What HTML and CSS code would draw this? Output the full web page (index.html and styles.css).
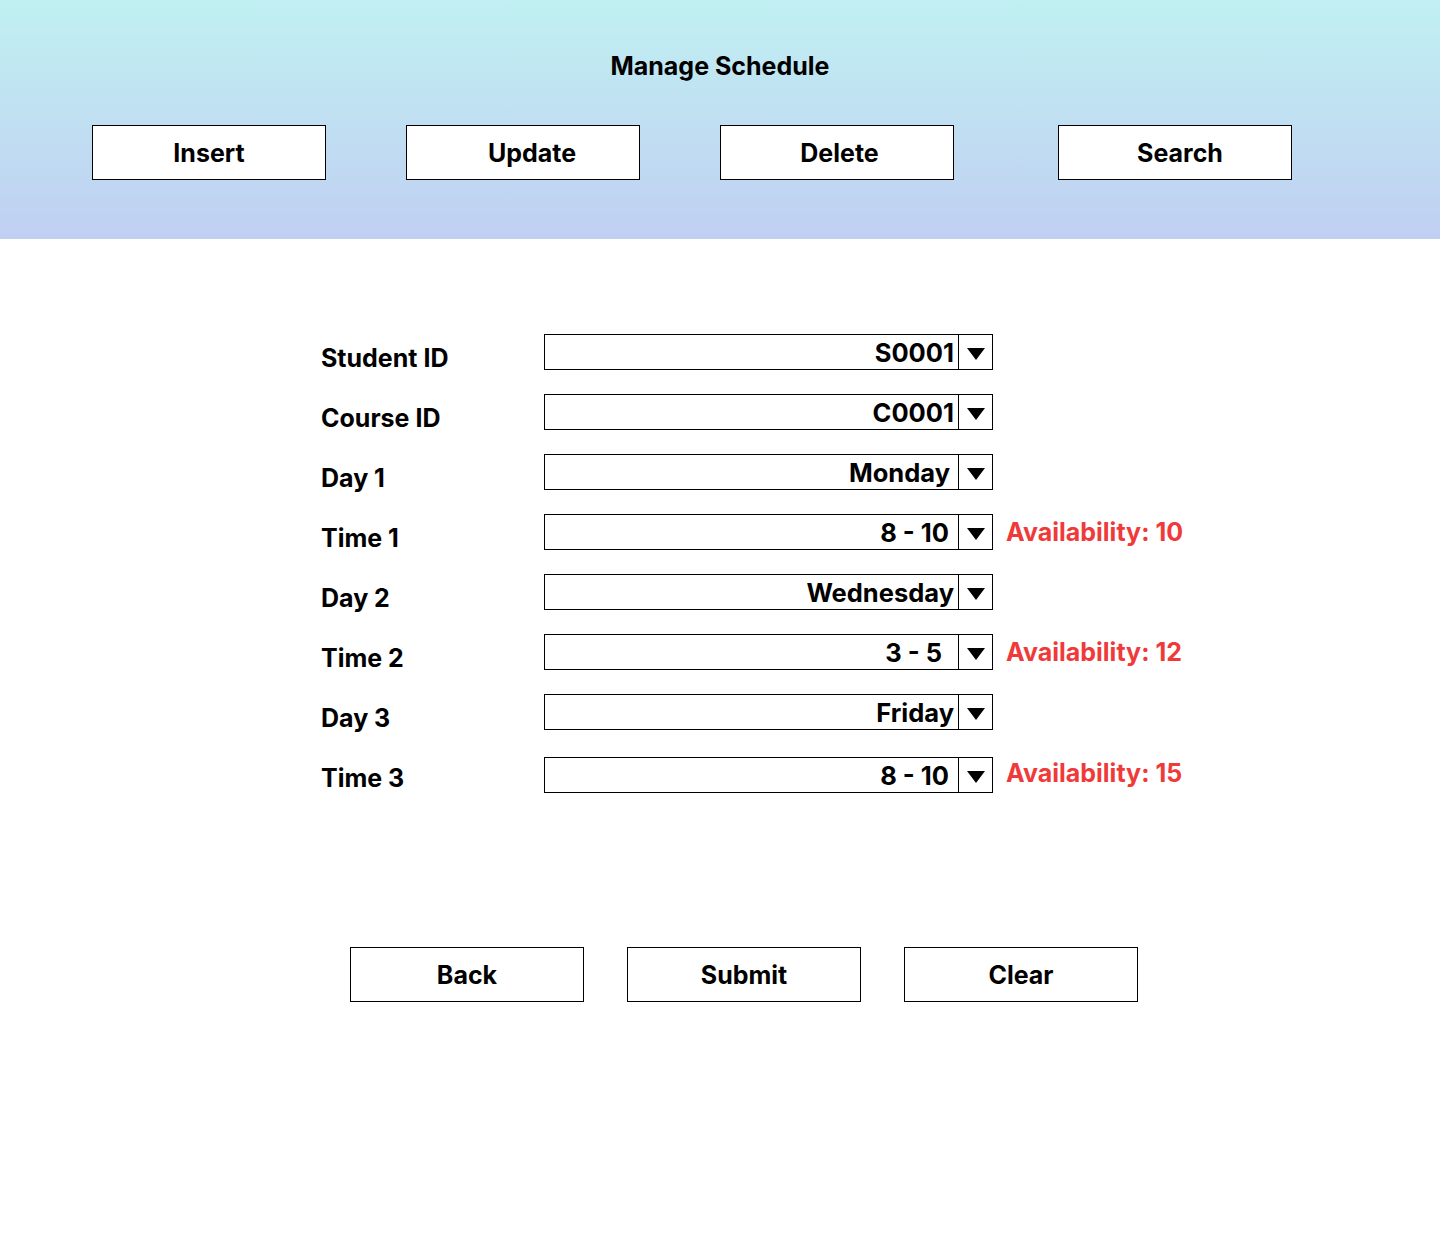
FILE: index.html
```html
<!DOCTYPE html>
<html lang="en">
<head>
<meta charset="utf-8">
<title>Manage Schedule</title>
<link rel="stylesheet" href="styles.css">
</head>
<body>
<header class="top">
  <h1 class="title">Manage Schedule</h1>
  <nav class="actions">
    <button class="btn">Insert</button>
    <button class="btn btn-update">Update</button>
    <button class="btn btn-delete">Delete</button>
    <button class="btn btn-far">Search</button>
  </nav>
</header>
<main class="form">
  <div class="row">
    <span class="label">Student ID</span>
    <div class="select"><span class="value">S0001</span><span class="arrow"><svg width="18" height="12" viewBox="0 0 18 12"><polygon points="0,0 18,0 9,12" fill="#000"/></svg></span></div>
  </div>
  <div class="row">
    <span class="label">Course ID</span>
    <div class="select"><span class="value">C0001</span><span class="arrow"><svg width="18" height="12" viewBox="0 0 18 12"><polygon points="0,0 18,0 9,12" fill="#000"/></svg></span></div>
  </div>
  <div class="row">
    <span class="label">Day 1</span>
    <div class="select"><span class="value v-monday">Monday</span><span class="arrow"><svg width="18" height="12" viewBox="0 0 18 12"><polygon points="0,0 18,0 9,12" fill="#000"/></svg></span></div>
  </div>
  <div class="row">
    <span class="label">Time 1</span>
    <div class="select"><span class="value v-time">8 - 10</span><span class="arrow"><svg width="18" height="12" viewBox="0 0 18 12"><polygon points="0,0 18,0 9,12" fill="#000"/></svg></span></div>
    <span class="avail">Availability: 10</span>
  </div>
  <div class="row">
    <span class="label">Day 2</span>
    <div class="select"><span class="value">Wednesday</span><span class="arrow"><svg width="18" height="12" viewBox="0 0 18 12"><polygon points="0,0 18,0 9,12" fill="#000"/></svg></span></div>
  </div>
  <div class="row">
    <span class="label">Time 2</span>
    <div class="select"><span class="value v-short">3 - 5</span><span class="arrow"><svg width="18" height="12" viewBox="0 0 18 12"><polygon points="0,0 18,0 9,12" fill="#000"/></svg></span></div>
    <span class="avail">Availability: 12</span>
  </div>
  <div class="row">
    <span class="label">Day 3</span>
    <div class="select"><span class="value">Friday</span><span class="arrow"><svg width="18" height="12" viewBox="0 0 18 12"><polygon points="0,0 18,0 9,12" fill="#000"/></svg></span></div>
  </div>
  <div class="row row-last">
    <span class="label">Time 3</span>
    <div class="select"><span class="value v-time">8 - 10</span><span class="arrow"><svg width="18" height="12" viewBox="0 0 18 12"><polygon points="0,0 18,0 9,12" fill="#000"/></svg></span></div>
    <span class="avail">Availability: 15</span>
  </div>
</main>
<footer class="bottom">
  <button class="btn">Back</button>
  <button class="btn">Submit</button>
  <button class="btn">Clear</button>
</footer>
</body>
</html>
```

FILE: styles.css
```css
* { box-sizing: border-box; }
html, body { margin: 0; padding: 0; background: #fff; }
body {
  font-family: Inter, "Liberation Sans", sans-serif;
  color: #000;
  width: 1440px;
  height: 1239px;
}
.top {
  height: 239px;
  background: linear-gradient(180deg, #c0f0f2 0%, #c0cff2 100%);
  padding-top: 51px;
}
.title {
  margin: 0;
  text-align: center;
  font-size: 25px;
  font-weight: 700;
  line-height: 30px;
}
.actions {
  display: flex;
  padding-left: 92px;
  margin-top: 44px;
  gap: 80px;
}
.btn {
  width: 234px;
  height: 55px;
  background: #fff;
  border: 1px solid #000;
  border-radius: 0;
  font-family: Inter, "Liberation Sans", sans-serif;
  font-size: 25px;
  font-weight: 700;
  color: #000;
  padding: 0;
  line-height: 54px;
}
.actions .btn-update { padding-left: 18px; }
.actions .btn-delete { padding-left: 5px; }
.actions .btn-far { margin-left: 24px; padding-left: 10px; }
.form {
  padding-left: 321px;
  padding-top: 95px;
  height: 708px;
}
.row {
  display: flex;
  align-items: flex-start;
  height: 36px;
  margin-bottom: 24px;
}
.row-last .select { margin-top: 3px; }
.row-last .avail { margin-top: 1px; }
.label {
  width: 223px;
  font-size: 25px;
  font-weight: 700;
  line-height: 36px;
  padding-top: 6px;
}
.select {
  width: 449px;
  height: 36px;
  border: 1px solid #000;
  display: flex;
  background: #fff;
}
.value {
  flex: 1;
  text-align: right;
  font-size: 25.5px;
  font-weight: 700;
  line-height: 35px;
  padding-right: 4px;
}
.v-monday { padding-right: 8px; }
.v-time { padding-right: 9px; }
.v-short { padding-right: 16px; }
.arrow {
  width: 34px;
  border-left: 1px solid #000;
  display: flex;
  align-items: center;
  justify-content: center;
  padding-top: 3px;
  padding-left: 1px;
}
.avail {
  margin-left: 13px;
  color: #f03a3a;
  font-size: 25px;
  font-weight: 700;
  line-height: 36px;
}
.bottom {
  display: flex;
  padding-left: 350px;
  gap: 43px;
}
```
